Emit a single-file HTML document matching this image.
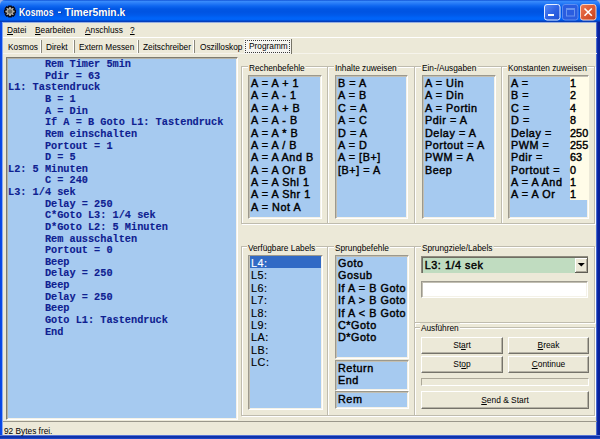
<!DOCTYPE html>
<html><head><meta charset="utf-8">
<style>
*{margin:0;padding:0;box-sizing:border-box}
html,body{width:600px;height:439px;overflow:hidden;background:#ECE9D8}
body{position:relative;font-family:"Liberation Sans",sans-serif;font-size:8.4px;color:#000}
.a{position:absolute}
.t{position:absolute;white-space:pre;line-height:1;font-size:9.4px;transform:scaleX(0.885);transform-origin:0 0}
#title{left:0;top:0;width:600px;height:23px;border-radius:5px 5px 0 0;background:linear-gradient(#0A4AD0 0px,#3A8CFC 1.2px,#2A7EF8 3px,#0E66F0 6px,#0056E4 9px,#0054E2 12px,#0059EA 15px,#0064F8 18px,#0062F6 19.8px,#0044C8 21px,#0A3AB0 21.8px,#A8BEEA 22.6px,#D8D8D8 23px)}
#lb{left:0;top:22px;width:2.6px;height:417px;background:linear-gradient(90deg,#0845E0 0,#0A4AE8 1.9px,#9CB8F4 2.6px)}
#rb{left:596.4px;top:22px;width:3.6px;height:417px;background:linear-gradient(90deg,#A8BEF0 0,#1238B8 0.8px,#0A22A0 2px,#0A2396 3.6px)}
#bb{left:0;top:435.4px;width:600px;height:3.6px;background:linear-gradient(#B8CCF8 0,#1A40C0 0.8px,#0A2A9E 1.8px,#1C48C6 3.6px)}
.sunk{position:absolute;border:1px solid;border-color:#9C998D #FFFFFF #FFFFFF #9C998D;box-shadow:inset 1px 1px 0 #C2BFB3,inset -1px -1px 0 #F4F2E8}
.grp{position:absolute;border:1px solid #BFBCAE;box-shadow:inset 1px 1px 0 #fff,1px 1px 0 #fff}
.cap{position:absolute;background:#ECE9D8;padding:0 1px;white-space:pre;line-height:1;font-size:9.4px;transform:scaleX(0.885);transform-origin:0 0}
.lst{font-weight:normal;-webkit-text-stroke-width:0.42px;font-size:10.8px;letter-spacing:0.55px;line-height:12.38px;white-space:pre}
.btn{position:absolute;background:#ECE9D8;border:1px solid;border-color:#fff #75736A #75736A #fff;box-shadow:inset -1px -1px 0 #B5B2A5;text-align:center}
u{text-decoration:underline;text-underline-offset:1px}
</style></head><body>
<div class="a" style="left:0;top:0;width:600px;height:6px;background:#9FB4E6"></div><div id="title" class="a"></div>
<svg class="a" style="left:0;top:0" width="600" height="23" viewBox="0 0 600 23">
<defs>
<linearGradient id="gmin" x1="0" y1="0" x2="1" y2="1"><stop offset="0" stop-color="#5A8EF8"/><stop offset="0.5" stop-color="#2F63E4"/><stop offset="1" stop-color="#1E4FD2"/></linearGradient>
<linearGradient id="gcl" x1="0" y1="0" x2="1" y2="1"><stop offset="0" stop-color="#EE7A55"/><stop offset="0.5" stop-color="#DD5A33"/><stop offset="1" stop-color="#C2401E"/></linearGradient>
<linearGradient id="gic" x1="0" y1="0" x2="0" y2="1"><stop offset="0" stop-color="#E8E8E8"/><stop offset="1" stop-color="#8A8A8A"/></linearGradient>
</defs>
<g transform="translate(10,11.5) scale(0.95)">
<path d="M-1.2,-5.6 L1.2,-5.6 L1.7,-3.9 L3.4,-4.8 L4.8,-3.4 L3.9,-1.7 L5.6,-1.2 L5.6,1.2 L3.9,1.7 L4.8,3.4 L3.4,4.8 L1.7,3.9 L1.2,5.6 L-1.2,5.6 L-1.7,3.9 L-3.4,4.8 L-4.8,3.4 L-3.9,1.7 L-5.6,1.2 L-5.6,-1.2 L-3.9,-1.7 L-4.8,-3.4 L-3.4,-4.8 L-1.7,-3.9 Z" fill="#B9B5A8" stroke="#0A0A14" stroke-width="1.5"/>
<circle r="2.4" fill="#6A6A60"/>
</g>
<g font-family="Liberation Sans" font-weight="bold" font-size="10.6">
<g fill="#0A1E6A" opacity="0.45" transform="translate(1,0.6)">
<text x="19" y="15.8" textLength="34.5" lengthAdjust="spacingAndGlyphs">Kosmos</text>
<rect x="58" y="11.6" width="3" height="1.3"/>
<text x="64.5" y="15.8" textLength="60.8" lengthAdjust="spacingAndGlyphs">Timer5min.k</text>
</g>
<g fill="#FFFFFF">
<text x="19" y="15.8" textLength="34.5" lengthAdjust="spacingAndGlyphs">Kosmos</text>
<rect x="58" y="11.6" width="3" height="1.3"/>
<text x="64.5" y="15.8" textLength="60.8" lengthAdjust="spacingAndGlyphs">Timer5min.k</text>
</g></g>
<rect x="544.5" y="4.5" width="15.5" height="15.5" rx="2.5" fill="url(#gmin)" stroke="#E6EEFF" stroke-width="1"/>
<rect x="548" y="14" width="6" height="2" fill="#FFFFFF"/>
<rect x="562.5" y="4.5" width="15.5" height="15.5" rx="2.5" fill="#2A5DE0" stroke="#6C98F4" stroke-width="1" stroke-opacity="0.8"/>
<rect x="566.5" y="8.5" width="8" height="7.5" fill="none" stroke="#6A94EE" stroke-width="1"/>
<rect x="566.5" y="8.5" width="8" height="1.5" fill="#6A94EE"/>
<rect x="580.5" y="4.5" width="15.5" height="15.5" rx="2.5" fill="url(#gcl)" stroke="#F6D2C4" stroke-width="1"/>
<path d="M584.5,8.5 L591.8,15.8 M591.8,8.5 L584.5,15.8" stroke="#FFFFFF" stroke-width="1.6"/>
</svg>
<div id="lb" class="a"></div><div id="rb" class="a"></div><div id="bb" class="a"></div>

<!-- menu -->
<div class="a" style="left:3px;top:37.4px;width:594px;height:1px;background:#fff"></div>
<div class="t" style="left:6.5px;top:25px"><u>D</u>atei</div>
<div class="t" style="left:35px;top:25px"><u>B</u>earbeiten</div>
<div class="t" style="left:85px;top:25px"><u>A</u>nschluss</div>
<div class="t" style="left:130px;top:25px"><u>?</u></div>

<!-- tabs -->
<div class="a" style="left:40px;top:40px;width:1px;height:13px;background:#fff"></div><div class="a" style="left:41px;top:40px;width:1.2px;height:13px;background:#8A887C"></div>
<div class="a" style="left:72.5px;top:40px;width:1px;height:13px;background:#fff"></div><div class="a" style="left:73.5px;top:40px;width:1.2px;height:13px;background:#8A887C"></div>
<div class="a" style="left:137px;top:40px;width:1px;height:13px;background:#fff"></div><div class="a" style="left:138px;top:40px;width:1.2px;height:13px;background:#8A887C"></div>
<div class="a" style="left:193px;top:40px;width:1px;height:13px;background:#fff"></div><div class="a" style="left:194px;top:40px;width:1.2px;height:13px;background:#8A887C"></div>
<div class="a" style="left:3px;top:53.3px;width:594px;height:1px;background:#F6F4EC"></div>
<div class="a" style="left:244px;top:39px;width:47px;height:15px;background:#F6F5F0"></div>
<div class="a" style="left:245px;top:40px;width:45px;height:13px;border:1px dotted #3A3A3A"></div>
<div class="a" style="left:290.5px;top:39px;width:1.3px;height:15px;background:#767468"></div>
<div class="t" style="left:8px;top:41.5px">Kosmos</div>
<div class="t" style="left:46px;top:41.5px">Direkt</div>
<div class="t" style="left:79px;top:41.5px">Extern Messen</div>
<div class="t" style="left:142.5px;top:41.5px">Zeitschreiber</div>
<div class="t" style="left:199.5px;top:41.5px">Oszilloskop</div>
<div class="t" style="left:249px;top:40.5px">Programm</div>

<!-- editor -->
<div class="sunk" style="left:5.5px;top:57px;width:232.5px;height:363px;background:#A6CAF0;border-color:#7D7B70 #FFFFFF #FFFFFF #7D7B70;box-shadow:inset 1px 1px 0 #B4B2A6,inset -1px -1px 0 #F4F2E8"></div>

<div class="a" style="left:8px;top:58.76px;font-family:'Liberation Mono',monospace;font-weight:bold;font-size:10.25px;line-height:11.62px;color:#0E2090;white-space:pre;-webkit-text-stroke:0.12px #0E2090;top:59.2px">      Rem Timer 5min
      Pdir = 63
L1: Tastendruck
      B = 1
      A = Din
      If A = B Goto L1: Tastendruck
      Rem einschalten
      Portout = 1
      D = 5
L2: 5 Minuten
      C = 240
L3: 1/4 sek
      Delay = 250
      C*Goto L3: 1/4 sek
      D*Goto L2: 5 Minuten
      Rem ausschalten
      Portout = 0
      Beep
      Delay = 250
      Beep
      Delay = 250
      Beep
      Goto L1: Tastendruck
      End</div>

<div class="grp" style="left:241px;top:66px;width:87px;height:158px"></div><div class="cap" style="left:247.5px;top:63.2px">Rechenbefehle</div>
<div class="grp" style="left:327px;top:66px;width:88px;height:158px"></div><div class="cap" style="left:334px;top:63.2px">Inhalte zuweisen</div>
<div class="grp" style="left:414px;top:66px;width:88px;height:158px"></div><div class="cap" style="left:420.6px;top:63.2px">Ein-/Ausgaben</div>
<div class="grp" style="left:501px;top:66px;width:94px;height:158px"></div><div class="cap" style="left:507px;top:63.2px">Konstanten zuweisen</div>
<div class="sunk lst" style="left:248px;top:75px;width:74px;height:143.6px;background:#A6CAF0;padding:1px 0 0 2px">A = A + 1
A = A - 1
A = A + B
A = A - B
A = A * B
A = A / B
A = A And B
A = A Or B
A = A Shl 1
A = A Shr 1
A = Not A</div>
<div class="sunk lst" style="left:335px;top:75px;width:73px;height:143.6px;background:#A6CAF0;padding:1px 0 0 2px">B = A
A = B
C = A
A = C
D = A
A = D
A = [B+]
[B+] = A</div>
<div class="sunk lst" style="left:422px;top:75px;width:74px;height:143.6px;background:#A6CAF0;padding:1px 0 0 2px">A = Uin
A = Din
A = Portin
Pdir = A
Delay = A
Portout = A
PWM = A
Beep</div>
<div class="sunk lst" style="left:508px;top:75px;width:81px;height:143.6px;background:#A6CAF0;padding:1px 0 0 2px">A =
B =
C =
D =
Delay =
PWM =
Pdir =
Portout =
A = A And
A = A Or</div>
<div class="a lst" style="left:570px;top:77px;width:18.6px;height:123px;background:#FFFCE8;padding-top:0;letter-spacing:0.1px">1
2
4
8
250
255
63
0
1
1</div>
<div class="grp" style="left:241px;top:246px;width:87px;height:170px"></div><div class="cap" style="left:247px;top:243.2px">Verfügbare Labels</div>
<div class="grp" style="left:327px;top:246px;width:88px;height:170px"></div><div class="cap" style="left:334px;top:243.2px">Sprungbefehle</div>
<div class="grp" style="left:414px;top:246px;width:181px;height:76.5px"></div><div class="cap" style="left:421px;top:243.2px">Sprungziele/Labels</div>
<div class="grp" style="left:414px;top:327px;width:181px;height:89px"></div><div class="cap" style="left:420.3px;top:323.2px">Ausführen</div>
<div class="sunk lst" style="left:248px;top:255px;width:74.5px;height:155px;background:#A6CAF0;padding:1px 0 0 2px;-webkit-text-stroke-width:0.15px"><div class="a" style="left:1px;top:0.2px;width:71px;height:12.2px;background:#316AC5"></div><span style="color:#fff;position:relative">L4:</span>
L5:
L6:
L7:
L8:
L9:
LA:
LB:
LC:</div>
<div class="sunk lst" style="left:335px;top:255px;width:74px;height:104px;background:#A6CAF0;padding:1px 0 0 2px">Goto
Gosub
If A = B Goto
If A &gt; B Goto
If A &lt; B Goto
C*Goto
D*Goto</div>
<div class="sunk lst" style="left:335px;top:360px;width:74px;height:30.5px;background:#A6CAF0;padding:1px 0 0 2px">Return
End</div>
<div class="sunk lst" style="left:335px;top:391.4px;width:74px;height:17.8px;background:#A6CAF0;padding:1px 0 0 2px">Rem</div>
<div class="a" style="left:421.3px;top:256px;width:166.5px;height:16.5px;background:#C0DCC0;border-top:1px solid #8E8B7E;border-left:1px solid #8E8B7E;box-shadow:inset 1px 1px 0 #6F6D62"></div>
<div class="a lst" style="left:424.7px;top:258.8px">L3: 1/4 sek</div>
<div class="a" style="left:574.8px;top:258px;width:13px;height:14.5px;background:#ECE9D8;border-right:1px solid #5F5D54;border-bottom:1px solid #5F5D54;box-shadow:inset 1px 1px 0 #fff,inset -1px -1px 0 #ACA899"></div>
<svg class="a" style="left:577px;top:262px" width="9" height="6"><path d="M0.8,1 L7.8,1 L4.3,4.6 Z" fill="#000"/></svg>
<div class="sunk" style="left:421.3px;top:281px;width:166.5px;height:16.5px;background:#fff"></div>
<div class="btn" style="left:421px;top:337px;width:82px;height:17px;line-height:15px">St<u>a</u>rt</div>
<div class="btn" style="left:508px;top:337px;width:81px;height:17px;line-height:15px"><u>B</u>reak</div>
<div class="btn" style="left:421px;top:356px;width:82px;height:17px;line-height:15px">St<u>o</u>p</div>
<div class="btn" style="left:508px;top:356px;width:81px;height:17px;line-height:15px"><u>C</u>ontinue</div>
<div class="sunk" style="left:421px;top:378px;width:168px;height:8px;box-shadow:none;border-color:#ACA899 #fff #fff #ACA899"></div>
<div class="btn" style="left:421px;top:391px;width:168px;height:18px;line-height:16px"><u>S</u>end &amp; Start</div>

<!-- status -->
<div class="a" style="left:2.6px;top:420.5px;width:594px;height:1.2px;background:#9A978A"></div>
<div class="t" style="left:4px;top:425.8px">92 Bytes frei.</div>
</body></html>
